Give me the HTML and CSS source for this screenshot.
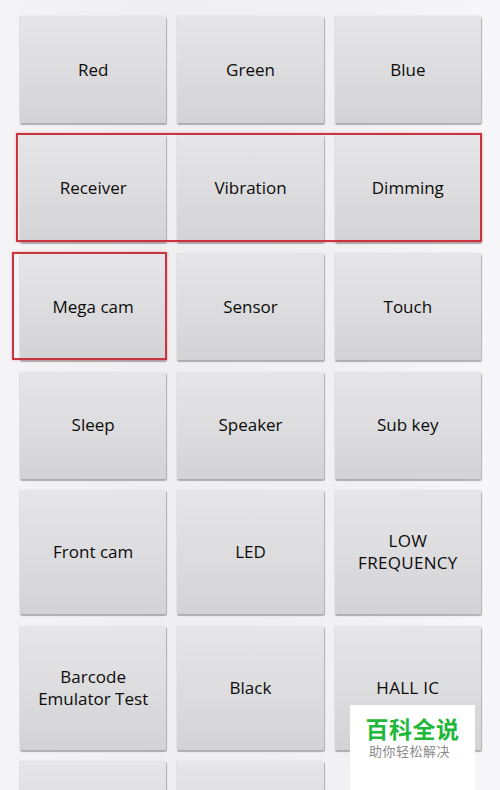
FILE: index.html
```html
<!DOCTYPE html>
<html lang="en">
<head>
    <meta charset="UTF-8">
    <meta name="viewport" content="width=device-width, initial-scale=1.0">
    <title>Test menu</title>
    <link rel="stylesheet" href="styles.css">
</head>
<body>
    <div id="test-menu">
        <div class="grid">
            <button class="test-btn">Red</button>
            <button class="test-btn">Green</button>
            <button class="test-btn">Blue</button>
            <button class="test-btn">Receiver</button>
            <button class="test-btn">Vibration</button>
            <button class="test-btn">Dimming</button>
            <button class="test-btn">Mega cam</button>
            <button class="test-btn">Sensor</button>
            <button class="test-btn">Touch</button>
            <button class="test-btn">Sleep</button>
            <button class="test-btn">Speaker</button>
            <button class="test-btn">Sub key</button>
            <button class="test-btn">Front cam</button>
            <button class="test-btn">LED</button>
            <button class="test-btn caps">LOW<br>FREQUENCY</button>
            <button class="test-btn">Barcode<br>Emulator Test</button>
            <button class="test-btn">Black</button>
            <button class="test-btn caps">HALL IC</button>
            <button class="test-btn"></button>
            <button class="test-btn"></button>
        </div>

        <!-- annotation boxes drawn over the grid -->
        <div class="mark mark-row"></div>
        <div class="mark mark-cam"></div>
    </div>

    <div class="watermark">
        <div class="wm-title">百科全说</div>
        <div class="wm-sub">助你轻松解决</div>
    </div>
</body>
</html>
```

FILE: styles.css
```css
body {
    margin: 0;
    padding: 0;
    height: 790px;
    overflow: hidden;
    font-family: 'Open Sans', 'Noto Sans', sans-serif;
    background: linear-gradient(90deg, #f4f3f5, #efeef0 30%, #f1f0f2 70%, #f7f6f8);
}

#test-menu {
    position: relative;
    padding: 15px 19px 0 19px;
}

.grid {
    display: grid;
    grid-template-columns: repeat(3, 1fr);
    column-gap: 10px;
    row-gap: 10.5px;
}

.test-btn {
    min-height: 108px;
    padding: 40px 4px;
    border: none;
    border-top: 1px solid #ececee;
    border-left: 1px solid #e2e1e3;
    border-radius: 2px;
    background: linear-gradient(180deg, #e6e5e7, #dcdbdd 55%, #d3d2d4);
    box-shadow: 1px 2px 1px rgba(0, 0, 0, 0.28);
    font-family: inherit;
    font-size: 17px;
    line-height: 22px;
    color: #0c0c0c;
    text-align: center;
}

.caps {
    letter-spacing: 0.3px;
}

.mark {
    position: absolute;
    border: 2px solid #c9343e;
    box-shadow: 0 0 2px rgba(220, 80, 90, 0.5);
    pointer-events: none;
}

.mark-row {
    left: 16px;
    top: 133px;
    width: 462px;
    height: 105px;
}

.mark-cam {
    left: 12px;
    top: 252px;
    width: 151px;
    height: 104px;
}

.watermark {
    position: absolute;
    left: 350px;
    top: 705px;
    width: 125px;
    height: 85px;
    background: #fff;
    text-align: center;
}

.wm-title {
    margin-top: 11px;
    font-family: 'Noto Sans CJK SC', sans-serif;
    font-weight: 700;
    font-size: 23px;
    line-height: 24px;
    color: #1fb83b;
    letter-spacing: 0.5px;
}

.wm-sub {
    margin-top: 4px;
    margin-left: -6px;
    font-family: 'Noto Sans CJK SC', sans-serif;
    font-size: 13px;
    line-height: 14px;
    color: #8a8a8a;
    letter-spacing: 0.5px;
}
```
